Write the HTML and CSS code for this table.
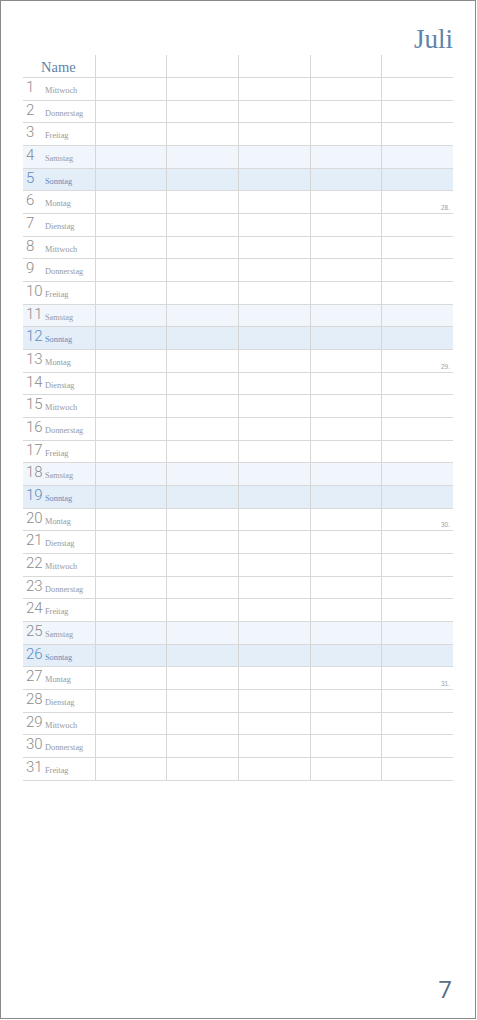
FILE: index.html
```html
<!DOCTYPE html>
<html lang="de">
<head>
  <meta charset="UTF-8">
  <title>Juli</title>
  <link rel="stylesheet" href="styles.css">
</head>
<body>
  <div class="page">
    <div class="month">Juli</div>
    <div class="planner" id="planner">
      <div class="row head">
        <div class="cell first"><span class="name-label">Name</span></div>
        <div class="cell"></div>
        <div class="cell"></div>
        <div class="cell"></div>
        <div class="cell"></div>
        <div class="cell"></div>
      </div>
    </div>
    <div class="page-no">7</div>
  </div>

  <script>
    const days = ['Mittwoch', 'Donnerstag', 'Freitag', 'Samstag', 'Sonntag', 'Montag', 'Dienstag'];
    const planner = document.getElementById('planner');
    let week = 28;

    for (let d = 1; d <= 31; d++) {
      const dayName = days[(d - 1) % 7];
      const row = document.createElement('div');
      row.className = 'row';
      if (dayName === 'Samstag') row.classList.add('sat');
      if (dayName === 'Sonntag') row.classList.add('sun');

      let html = '<div class="cell first"><span class="num">' + d + '</span><span class="day">' + dayName + '</span></div>';
      for (let c = 0; c < 4; c++) html += '<div class="cell"></div>';
      // calendar week goes in the last column on mondays
      if (dayName === 'Montag') {
        html += '<div class="cell"><span class="kw">' + week + '.</span></div>';
        week++;
      } else {
        html += '<div class="cell"></div>';
      }
      row.innerHTML = html;
      planner.appendChild(row);
    }
  </script>
</body>
</html>
```

FILE: styles.css
```css
body {
  margin: 0;
  background: #fff;
}
.page {
  width: 476px;
  height: 1019px;
  box-sizing: border-box;
  border: 1px solid #8a8a8a;
  padding: 0 22px;
  display: flex;
  flex-direction: column;
  font-family: "Liberation Serif", serif;
}
.month {
  height: 54px;
  text-align: right;
  font-size: 27px;
  line-height: 1;
  color: #5f83a9;
  padding-top: 25px;
  box-sizing: border-box;
}
.planner {
  width: 430px;
}
.row {
  display: grid;
  grid-template-columns: repeat(6, 1fr);
  height: 22.68px;
  box-sizing: border-box;
  border-bottom: 1px solid #d9d9d9;
}
.row.head {
  height: 23px;
}
.row.sat { background: #f1f6fc; }
.row.sun { background: #e4eef9; }
.cell {
  border-left: 1px solid #d6d6d6;
  position: relative;
}
.cell.first {
  border-left: none;
  display: flex;
  align-items: baseline;
  padding-left: 3px;
}
.name-label {
  font-size: 14.5px;
  color: #5f83a9;
  padding-left: 15px;
  line-height: 25px;
}
.num {
  font-family: "Liberation Sans Narrow", "Roboto", sans-serif;
  font-weight: 300;
  font-size: 15px;
  line-height: 18px;
  color: #8c8c8c;
  width: 19px;
  flex: none;
}
.day {
  font-size: 8.3px;
  color: #999;
  position: relative;
  top: 1px;
}
.sun .num, .sun .day {
  color: #5d8cbc;
}
.kw {
  position: absolute;
  right: 3px;
  bottom: 2px;
  font-size: 6.5px;
  color: #a0a0a0;
  font-family: "Liberation Sans", sans-serif;
}
.page-no {
  margin-top: auto;
  margin-bottom: 17px;
  padding-right: 1px;
  text-align: right;
  font-family: "Open Sans", sans-serif;
  font-weight: 400;
  font-size: 24px;
  line-height: 1;
  color: #566d86;
}
```
